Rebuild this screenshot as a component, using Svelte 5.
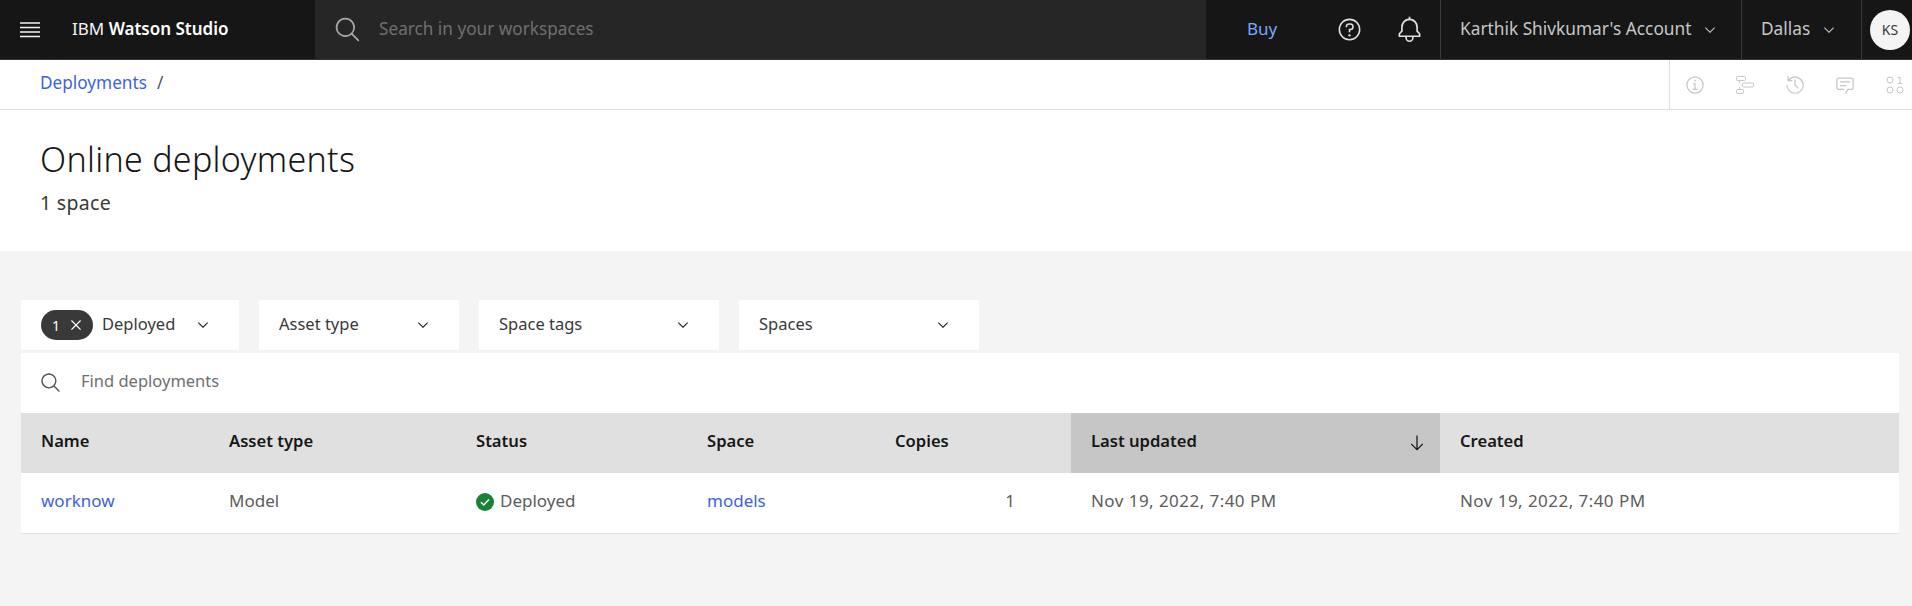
<script>
	const filters = [
		{ label: 'Deployed', count: 1, width: 218 },
		{ label: 'Asset type', width: 200 },
		{ label: 'Space tags', width: 240 },
		{ label: 'Spaces', width: 240 }
	];
</script>

{#snippet chevron(cls)}
	<svg class={cls} viewBox="0 0 16 16" width="16" height="16" fill="currentColor"><path d="M8 11 3 6l.7-.7L8 9.6l4.3-4.3.7.7z" /></svg>
{/snippet}

{#snippet search(size)}
	<svg viewBox="0 0 32 32" width={size} height={size} fill="currentColor"><path d="m29 27.6-7.6-7.6a11 11 0 1 0-1.4 1.4l7.6 7.6ZM4 13a9 9 0 1 1 9 9 9 9 0 0 1-9-9Z" /></svg>
{/snippet}

<div class="page">
	<header class="topbar">
		<div class="brand">
			<svg class="menu" viewBox="0 0 20 16" width="20" height="16" fill="none" stroke="currentColor" stroke-width="1.4"><path d="M0 1h20M0 5.5h20M0 10h20M0 14.5h20" /></svg>
			<span class="product">IBM <b>Watson Studio</b></span>
		</div>
		<div class="global-search">
			{@render search(28)}
			<span>Search in your workspaces</span>
		</div>
		<div class="actions">
			<span class="buy">Buy</span>
			<svg class="help" viewBox="0 0 32 32" width="25" height="25" fill="currentColor"><path d="M16 2a14 14 0 1 0 14 14A14 14 0 0 0 16 2Zm0 26a12 12 0 1 1 12-12 12 12 0 0 1-12 12Z" /><circle cx="16" cy="23.5" r="1.5" /><path d="M17 8h-1.5a4.5 4.5 0 0 0-4.5 4.5v.5h2v-.5a2.5 2.5 0 0 1 2.5-2.5H17a2.5 2.5 0 0 1 0 5h-2v4.5h2V17a4.5 4.5 0 0 0 0-9Z" /></svg>
			<svg class="bell" viewBox="0 0 32 32" width="27" height="27" fill="currentColor"><path d="M28.7 20.3 26 17.6V13a10 10 0 0 0-9-10V1h-2v2a10 10 0 0 0-9 10v4.6l-2.7 2.7A1 1 0 0 0 3 21v3a1 1 0 0 0 1 1h7v.8a5 5 0 0 0 10 0V25h7a1 1 0 0 0 1-1v-3a1 1 0 0 0-.3-.7ZM19 26a3 3 0 0 1-6 0v-1h6Zm8-3H5v-1.6l2.7-2.7A1 1 0 0 0 8 18v-5a8 8 0 0 1 16 0v5a1 1 0 0 0 .3.7l2.7 2.7Z" /></svg>
		</div>
		<div class="switcher account"><span>Karthik Shivkumar's Account</span> {@render chevron('chev')}</div>
		<div class="switcher region"><span>Dallas</span> {@render chevron('chev')}</div>
		<div class="avatar-wrap"><div class="avatar">KS</div></div>
	</header>

	<nav class="crumbs">
		<div class="trail"><a href="#top">Deployments</a><span>/</span></div>
		<div class="tools">
			<svg viewBox="0 0 32 32" width="20" height="20" fill="currentColor"><path d="M17 22v-9h-4v2h2v7h-3v2h8v-2Z" /><circle cx="16" cy="9" r="1.5" /><path d="M16 30a14 14 0 1 1 14-14 14 14 0 0 1-14 14Zm0-26a12 12 0 1 0 12 12A12 12 0 0 0 16 4Z" /></svg>
			<svg viewBox="0 0 20 20" width="20" height="20" fill="none" stroke="currentColor"><rect x="1.5" y="1.5" width="9" height="4" rx="1" /><rect x="7.5" y="8" width="11" height="4" rx="1" /><rect x="1.5" y="14.500" width="7" height="4" rx="1" /><path d="M4.500 5.500V8M4.500 12v2.500" /></svg>
			<svg viewBox="0 0 32 32" width="20" height="20" fill="currentColor"><path d="M20.6 22 15 16.4V7h2v8.600l5 5Z" /><path d="M16 2A13.900 13.900 0 0 0 6 6.300V2H4v8h8V8H7.500A12 12 0 1 1 4 16H2A14 14 0 1 0 16 2Z" /></svg>
			<svg viewBox="0 0 32 32" width="20" height="20" fill="currentColor"><path d="M17.700 30 16 29l4-7h6a2 2 0 0 0 2-2V8a2 2 0 0 0-2-2H6a2 2 0 0 0-2 2v12a2 2 0 0 0 2 2h9v2H6a4 4 0 0 1-4-4V8a4 4 0 0 1 4-4h20a4 4 0 0 1 4 4v12a4 4 0 0 1-4 4h-4.800Z" /><path d="M8 10h16v2H8zM8 16h10v2H8z" /></svg>
			<svg viewBox="0 0 20 20" width="20" height="20" fill="none" stroke="currentColor"><circle cx="5" cy="5" r="3" /><circle cx="5" cy="15" r="3" /><circle cx="15" cy="15" r="3" /><path d="M12.500 3 15 2v6.500M12.500 8.500h5" /></svg>
		</div>
	</nav>

	<section class="heading">
		<h1>Online deployments</h1>
		<p>1 space</p>
	</section>

	<main class="content">
		<div class="filters">
			{#each filters as f}
				<div class="filter" style="width: {f.width}px">
					{#if f.count}
						<span class="tag">{f.count}<svg viewBox="0 0 16 16" width="20" height="20" fill="currentColor"><path d="M12 4.700 11.300 4 8 7.300 4.700 4 4 4.700 7.300 8 4 11.300l.7.700L8 8.700l3.300 3.300.7-.7L8.700 8Z" /></svg></span>
					{/if}
					<span class="filter-label">{f.label}</span>
					{@render chevron('filter-chev')}
				</div>
			{/each}
		</div>

		<div class="table">
			<div class="toolbar">
				{@render search(22)}
				<span>Find deployments</span>
			</div>
			<div class="row head">
				<div>Name</div>
				<div>Asset type</div>
				<div>Status</div>
				<div>Space</div>
				<div>Copies</div>
				<div class="sorted"><span>Last updated</span>
					<svg viewBox="0 0 32 32" width="20" height="20" fill="currentColor"><path d="M24.600 16.600 17 24.200V4h-2v20.200l-7.600-7.600L6 18l10 10 10-10Z" /></svg>
				</div>
				<div>Created</div>
			</div>
			<div class="row body">
				<div><a href="#top">worknow</a></div>
				<div>Model</div>
				<div class="status">
					<svg viewBox="0 0 18 18" width="18" height="18"><circle cx="9" cy="9" r="9" fill="#198038" /><path d="m5 9.200 2.800 2.800L13 6.500" fill="none" stroke="#fff" stroke-width="1.500" /></svg>
					<span>Deployed</span>
				</div>
				<div><a href="#top">models</a></div>
				<div class="copies">1</div>
				<div class="date">Nov 19, 2022, 7:40 PM</div>
				<div class="date">Nov 19, 2022, 7:40 PM</div>
			</div>
		</div>
	</main>
</div>

<style>
	:global(body) {
		margin: 0;
		background: #f4f4f4;
	}

	.page {
		height: 606px;
		overflow: hidden;
		display: flex;
		flex-direction: column;
		font-family: 'Noto Sans', 'Open Sans', sans-serif;
		font-size: 17px;
		color: #161616;
		background: #f4f4f4;
	}

	a {
		color: #3d63d8;
		text-decoration: none;
	}

	/* Top bar */
	.topbar {
		display: flex;
		height: 60px;
		box-sizing: border-box;
		background: #161616;
		border-bottom: 1px solid #333;
		color: #c6c6c6;
		flex-shrink: 0;
	}

	.topbar > * {
		flex-shrink: 0;
	}

	.brand {
		width: 315px;
		display: flex;
		align-items: center;
		padding-left: 20px;
		box-sizing: border-box;
		color: #f4f4f4;
	}

	.menu {
		margin-right: 32px;
	}

	.product {
		font-size: 17px;
		padding-bottom: 2px;
		color: #f4f4f4;
	}

	.product b {
		font-weight: 600;
		color: #fff;
	}

	.global-search {
		width: 891px;
		display: flex;
		align-items: center;
		gap: 17px;
		padding-left: 19px;
		box-sizing: border-box;
		background: #262626;
		color: #a8a8a8;
	}

	.global-search span {
		color: #6f6f6f;
		font-size: 17.2px;
		padding-bottom: 2px;
	}

	.actions {
		width: 234px;
		display: flex;
		align-items: center;
		padding-left: 41px;
		box-sizing: border-box;
		color: #e0e0e0;
	}

	.buy {
		color: #78a9ff;
		width: 90px;
		padding-bottom: 2px;
	}

	.help {
		margin-right: 34px;
	}

	.switcher {
		display: flex;
		align-items: center;
		gap: 11px;
		padding-left: 19px;
		box-sizing: border-box;
		border-left: 1px solid #393939;
		color: #c6c6c6;
		font-size: 17.3px;
	}

	.switcher span {
		padding-bottom: 2px;
	}

	.account {
		width: 301px;
	}

	.region {
		width: 120px;
	}

	.avatar-wrap {
		flex: 1;
		display: flex;
		align-items: center;
		padding-left: 8px;
		border-left: 1px solid #393939;
	}

	.avatar {
		width: 40px;
		height: 40px;
		flex-shrink: 0;
		border-radius: 50%;
		display: flex;
		align-items: center;
		justify-content: center;
		background: #f4f4f4;
		color: #393939;
		font-size: 14px;
	}

	/* Breadcrumb strip */
	.crumbs {
		height: 50px;
		box-sizing: border-box;
		display: flex;
		justify-content: space-between;
		background: #fff;
		border-bottom: 1px solid #e0e0e0;
		flex-shrink: 0;
	}

	.trail {
		display: flex;
		align-items: center;
		gap: 10px;
		padding: 0 0 5px 40px;
		font-size: 17.2px;
	}

	.trail span {
		color: #525252;
	}

	.tools {
		width: 243px;
		box-sizing: border-box;
		display: flex;
		align-items: center;
		gap: 30px;
		padding-left: 15px;
		border-left: 1px solid #e0e0e0;
		color: #c6c6c6;
	}

	/* Page heading */
	.heading {
		height: 141px;
		box-sizing: border-box;
		padding: 29px 40px 0;
		background: #fff;
		flex-shrink: 0;
	}

	h1 {
		margin: 0;
		font-size: 34px;
		font-weight: 300;
		line-height: 40px;
		letter-spacing: 0.3px;
	}

	.heading p {
		margin: 11px 0 0;
		font-size: 19.5px;
		line-height: 26px;
		letter-spacing: 0.3px;
		color: #393939;
	}

	/* Filters and table */
	.content {
		padding: 49px 13px 0 21px;
	}

	.filters {
		display: flex;
		gap: 20px;
		margin-bottom: 3px;
	}

	.filter {
		height: 50px;
		box-sizing: border-box;
		display: flex;
		align-items: center;
		padding: 0 28px 0 20px;
		background: #fff;
		color: #393939;
		font-size: 16.5px;
	}

	.filter-label {
		flex: 1;
		padding-bottom: 3px;
	}

	.filter-chev {
		color: #161616;
	}

	.tag {
		display: flex;
		align-items: center;
		gap: 6px;
		height: 30px;
		margin: 0 9px 0 0;
		padding: 0 7px 0 11px;
		border-radius: 15px;
		background: #393939;
		color: #fff;
		font-size: 14px;
	}

	.table {
		background: #fff;
	}

	.toolbar {
		height: 60px;
		display: flex;
		align-items: center;
		gap: 19px;
		padding-left: 19px;
		color: #525252;
	}

	.toolbar span {
		color: #6f6f6f;
		font-size: 16.5px;
		padding-bottom: 5px;
	}

	.row {
		display: grid;
		grid-template-columns: 188px 247px 231px 188px 196px 369px 1fr;
		height: 60px;
	}

	.row > div {
		display: flex;
		align-items: center;
		padding: 0 20px 5px;
	}

	.head {
		background: #e0e0e0;
		font-weight: 600;
		font-size: 16.6px;
		color: #161616;
	}

	.head .sorted {
		background: #c6c6c6;
		justify-content: space-between;
		padding: 0 13px 0 20px;
	}

	.sorted span {
		padding-bottom: 5px;
	}

	.body {
		box-sizing: border-box;
		height: 61px;
		border-bottom: 1px solid #e0e0e0;
		color: #5c5c5c;
		font-size: 17px;
	}

	.body .status {
		gap: 6px;
		padding-bottom: 2px;
	}

	.status span {
		padding-bottom: 3px;
	}

	.body .copies {
		justify-content: flex-end;
		padding-right: 56px;
	}

	.date {
		letter-spacing: 0.45px;
	}
</style>
